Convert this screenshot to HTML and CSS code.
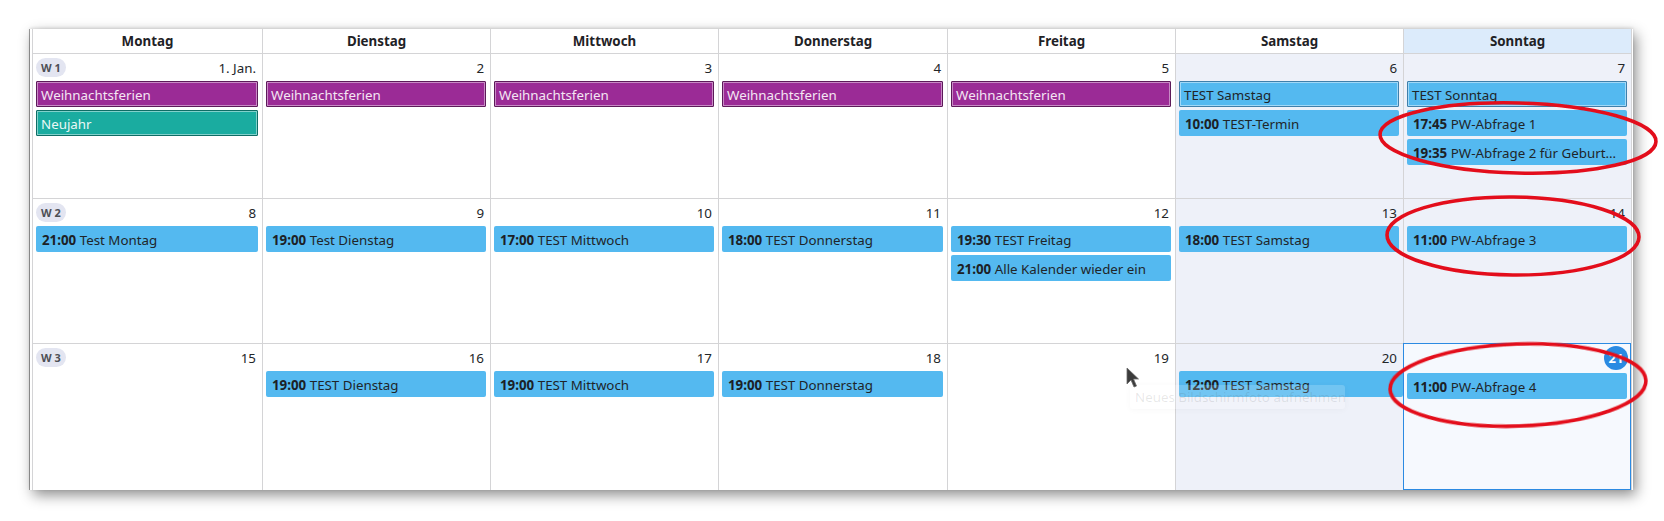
FILE: index.html
```html
<!DOCTYPE html>
<html lang="de">
<head>
<meta charset="utf-8">
<title>Kalender</title>
<link rel="stylesheet" href="styles.css">
</head>
<body>
<div class="window">
  <div class="cal">
    <div class="head">Montag</div>
    <div class="head">Dienstag</div>
    <div class="head">Mittwoch</div>
    <div class="head">Donnerstag</div>
    <div class="head">Freitag</div>
    <div class="head">Samstag</div>
    <div class="head head-today">Sonntag</div>

    <!-- Week 1 -->
    <div class="cell">
      <div class="dayline"><span class="wk">W 1</span><span class="num">1. Jan.</span></div>
      <div class="ev allday purple">Weihnachtsferien</div>
      <div class="ev allday teal">Neujahr</div>
    </div>
    <div class="cell">
      <div class="dayline"><span class="num">2</span></div>
      <div class="ev allday purple">Weihnachtsferien</div>
    </div>
    <div class="cell">
      <div class="dayline"><span class="num">3</span></div>
      <div class="ev allday purple">Weihnachtsferien</div>
    </div>
    <div class="cell">
      <div class="dayline"><span class="num">4</span></div>
      <div class="ev allday purple">Weihnachtsferien</div>
    </div>
    <div class="cell">
      <div class="dayline"><span class="num">5</span></div>
      <div class="ev allday purple">Weihnachtsferien</div>
    </div>
    <div class="cell weekend">
      <div class="dayline"><span class="num">6</span></div>
      <div class="ev allday blue">TEST Samstag</div>
      <div class="ev"><b>10:00</b> TEST-Termin</div>
    </div>
    <div class="cell weekend">
      <div class="dayline"><span class="num">7</span></div>
      <div class="ev allday blue">TEST Sonntag</div>
      <div class="ev"><b>17:45</b> PW-Abfrage 1</div>
      <div class="ev"><b>19:35</b> PW-Abfrage 2 für Geburtstagskalender</div>
    </div>

    <!-- Week 2 -->
    <div class="cell">
      <div class="dayline"><span class="wk">W 2</span><span class="num">8</span></div>
      <div class="ev"><b>21:00</b> Test Montag</div>
    </div>
    <div class="cell">
      <div class="dayline"><span class="num">9</span></div>
      <div class="ev"><b>19:00</b> Test Dienstag</div>
    </div>
    <div class="cell">
      <div class="dayline"><span class="num">10</span></div>
      <div class="ev"><b>17:00</b> TEST Mittwoch</div>
    </div>
    <div class="cell">
      <div class="dayline"><span class="num">11</span></div>
      <div class="ev"><b>18:00</b> TEST Donnerstag</div>
    </div>
    <div class="cell">
      <div class="dayline"><span class="num">12</span></div>
      <div class="ev"><b>19:30</b> TEST Freitag</div>
      <div class="ev"><b>21:00</b> Alle Kalender wieder ein</div>
    </div>
    <div class="cell weekend">
      <div class="dayline"><span class="num">13</span></div>
      <div class="ev"><b>18:00</b> TEST Samstag</div>
    </div>
    <div class="cell weekend">
      <div class="dayline"><span class="num">14</span></div>
      <div class="ev"><b>11:00</b> PW-Abfrage 3</div>
    </div>

    <!-- Week 3 -->
    <div class="cell">
      <div class="dayline"><span class="wk">W 3</span><span class="num">15</span></div>
    </div>
    <div class="cell">
      <div class="dayline"><span class="num">16</span></div>
      <div class="ev"><b>19:00</b> TEST Dienstag</div>
    </div>
    <div class="cell">
      <div class="dayline"><span class="num">17</span></div>
      <div class="ev"><b>19:00</b> TEST Mittwoch</div>
    </div>
    <div class="cell">
      <div class="dayline"><span class="num">18</span></div>
      <div class="ev"><b>19:00</b> TEST Donnerstag</div>
    </div>
    <div class="cell">
      <div class="dayline"><span class="num">19</span></div>
    </div>
    <div class="cell weekend">
      <div class="dayline"><span class="num">20</span></div>
      <div class="ev ev-wide"><b>12:00</b> TEST Samstag</div>
    </div>
    <div class="cell today">
      <div class="dayline dayline-today"><span class="today-badge">21</span></div>
      <div class="ev"><b>11:00</b> PW-Abfrage 4</div>
    </div>
  </div>
</div>

<svg class="marks" width="1664" height="521" viewBox="0 0 1664 521">
  <defs>
    <filter id="soft" x="-10%" y="-30%" width="120%" height="160%">
      <feGaussianBlur stdDeviation="0.5"/>
    </filter>
  </defs>
  <g fill="none" stroke="#e3101a" stroke-width="3.6" filter="url(#soft)">
    <ellipse cx="1518" cy="138" rx="138" ry="35" transform="rotate(1.5 1518 138)"/>
    <ellipse cx="1513" cy="236" rx="126" ry="39" transform="rotate(0.5 1513 236)"/>
    <ellipse cx="1518" cy="385" rx="128" ry="41" transform="rotate(-2 1518 385)"/>
  </g>
</svg>

<div class="tip">Neues Bildschirmfoto aufnehmen</div>

<svg class="cursor" width="14" height="22" viewBox="0 0 14 22">
  <path d="M1 1 L1 17 L5 13 L8 20 L10.5 19 L7.5 12 L12.5 12 Z" fill="#3b3b3b" stroke="#6a6a6a" stroke-width="0.8" stroke-linejoin="round"/>
</svg>
</body>
</html>
```

FILE: styles.css
```css
html, body {
  margin: 0;
  padding: 0;
  background: #ffffff;
}

body {
  width: 1664px;
  height: 521px;
  overflow: hidden;
  position: relative;
  font-family: "Noto Sans", "Open Sans", sans-serif;
  color: #232629;
}

.window {
  margin: 29px 0 0 30px;
  width: 1603px;
  height: 461px;
  box-sizing: border-box;
  padding: 0 1px 0 2px;
  background: #ffffff;
  box-shadow: -1px 0 0 rgba(0, 0, 0, 0.35), 0 -1px 3px rgba(0, 0, 0, 0.12), 3px 5px 13px rgba(0, 0, 0, 0.45);
}

.cal {
  display: grid;
  grid-template-columns: 230px 228px 228px 229px 228px 228px 228px;
  grid-template-rows: 25px 145px 145px 146px;
  border-left: 1px solid #d4d4d6;
  height: 461px;
  box-sizing: border-box;
}

.head {
  box-sizing: border-box;
  border-right: 1px solid #d4d4d6;
  border-bottom: 1px solid #d4d4d6;
  text-align: center;
  font-weight: 700;
  font-size: 13.33px;
  line-height: 24px;
  color: #1f2226;
  background: #ffffff;
}

.head-today {
  background: #dcebfb;
}

.cell {
  box-sizing: border-box;
  border-right: 1px solid #d4d4d6;
  border-bottom: 1px solid #d4d4d6;
  background: #ffffff;
  min-width: 0;
  overflow: hidden;
}

.cal > .cell:nth-last-child(-n+7) {
  border-bottom: none;
}

.weekend {
  background: #eef1f9;
}

.today {
  background: #f6f9fe;
  position: relative;
  overflow: visible;
}

.today::after {
  content: "";
  position: absolute;
  top: -1px;
  left: -1px;
  right: 0;
  bottom: 0;
  border: 1px solid #2b8ae2;
  pointer-events: none;
}

.dayline {
  display: flex;
  align-items: flex-start;
  height: 27px;
  box-sizing: border-box;
  padding: 4px 6px 0 3px;
}

.dayline-today {
  height: 29px;
  padding: 2px 3px 0 3px;
}

.num {
  margin-left: auto;
  font-size: 13.33px;
  line-height: 20px;
  color: #232629;
}

.wk {
  width: 30px;
  height: 19px;
  border-radius: 10px;
  background: #e3e5f1;
  color: #4d4f55;
  font-size: 11px;
  font-weight: 700;
  line-height: 19px;
  text-align: center;
}

.today-badge {
  margin-left: auto;
  width: 24px;
  height: 24px;
  border-radius: 50%;
  background: #2a8ae2;
  color: #ffffff;
  font-size: 13px;
  font-weight: 700;
  line-height: 24px;
  text-align: center;
}

.ev {
  height: 26px;
  box-sizing: border-box;
  margin: 0 4px 3px 3px;
  padding: 0 6px;
  border-radius: 2px;
  background: #54b9f0;
  color: #1f2529;
  font-size: 13.33px;
  line-height: 28px;
  white-space: nowrap;
  overflow: hidden;
  text-overflow: ellipsis;
}

.ev b {
  font-weight: 700;
  color: #1c2126;
}

.ev-wide {
  margin-right: 0;
}

.allday {
  border: 1px solid #3f7fab;
  border-radius: 1px;
  box-shadow: inset 0 0 0 1px rgba(255, 255, 255, 0.45);
  line-height: 26px;
  padding: 0 5px 0 4px;
}

.purple {
  background: #9b2b96;
  border-color: #5c1a59;
  color: #f4e6f3;
}

.teal {
  background: #1aaca0;
  border-color: #0f6d65;
  color: #eaf8f6;
}

.blue {
  background: #54b9f0;
  border-color: #3f7fab;
  color: #1f2529;
}

.marks {
  position: absolute;
  left: 0;
  top: 0;
  pointer-events: none;
}

.tip {
  position: absolute;
  left: 1130px;
  top: 385px;
  width: 215px;
  height: 24px;
  box-sizing: border-box;
  padding: 0 5px;
  border-radius: 3px;
  background: rgba(255, 255, 255, 0.18);
  box-shadow: 0 1px 6px rgba(0, 0, 0, 0.035);
  color: rgba(70, 70, 70, 0.13);
  font-size: 13.33px;
  line-height: 24px;
  white-space: nowrap;
}

.cursor {
  position: absolute;
  left: 1126px;
  top: 367px;
}
```
